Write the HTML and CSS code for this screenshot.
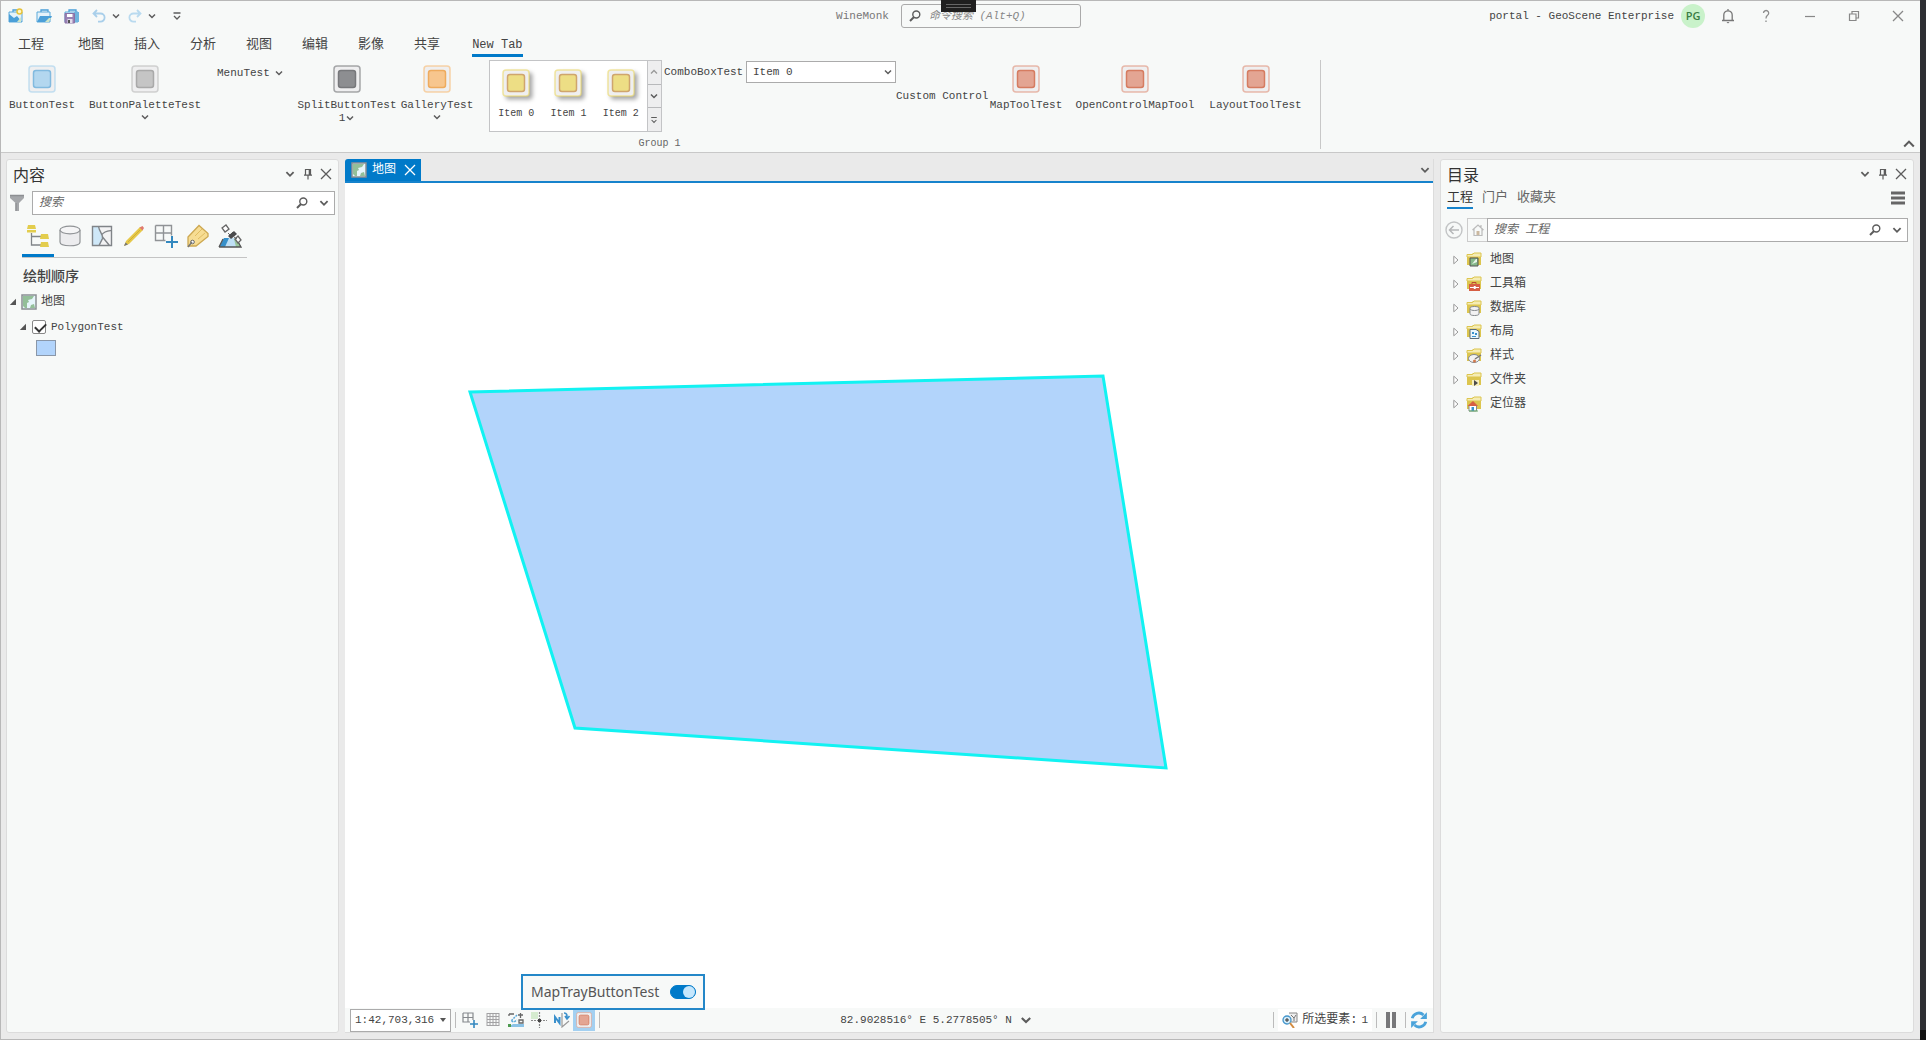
FILE: index.html
```html
<!DOCTYPE html>
<html lang="zh-CN">
<head>
<meta charset="utf-8">
<title>WineMonk</title>
<link rel="stylesheet" href="styles.css">
</head>
<body>
<svg class="defs" aria-hidden="true">
  <symbol id="chev" viewBox="0 0 10 10"><path d="M2 3.500l3 3 3-3" fill="none" stroke="currentColor" stroke-width="1.500"/></symbol>
  <symbol id="chev-up" viewBox="0 0 10 10"><path d="M2 6.500l3-3 3 3" fill="none" stroke="currentColor" stroke-width="1.300"/></symbol>
  <symbol id="more" viewBox="0 0 10 10"><path d="M1.500 2h7M2 5l3 3 3-3" fill="none" stroke="currentColor" stroke-width="1.300"/></symbol>
  <symbol id="cross" viewBox="0 0 12 12"><path d="M1 1l10 10M11 1L1 11" fill="none" stroke="currentColor" stroke-width="1.300"/></symbol>
  <symbol id="pin" viewBox="0 0 12 12"><path d="M3.500 1.500h5v5.500h-5zM7.300 1.500v5.500M2 7.200h8M6 7v4.500" fill="none" stroke="currentColor" stroke-width="1.200"/></symbol>
  <symbol id="lens" viewBox="0 0 12 12"><circle cx="7.300" cy="4.500" r="3.500" fill="none" stroke="currentColor" stroke-width="1.400"/><path d="M5 7L1 11" stroke="currentColor" stroke-width="2"/></symbol>
  <symbol id="sq" viewBox="0 0 28 28"><rect x="1" y="1" width="26" height="26" rx="3" fill="#efeff0" stroke="currentColor" stroke-opacity=".65" stroke-width="1.500"/><rect x="5.500" y="5.500" width="17" height="17" rx="2.500" fill="currentColor" fill-opacity=".85" stroke="var(--edge)" stroke-width="1.500"/></symbol>
  <symbol id="map" viewBox="0 0 16 16"><rect x="1" y="1" width="14" height="14" fill="#e6f5fb" stroke="#8b8f93" stroke-width="1.500"/><path d="M2 2h11l-2 3-4 1 1 2-2 1 0 5H4l-2-2z" fill="#93bf99"/><path d="M9 14l1-3 3-1 1 4z" fill="#93bf99"/></symbol>
  <symbol id="folder" viewBox="0 0 16 16"><path d="M1 13V3h5V1.500h9V13z" fill="#dcc54e"/><path d="M1 5V2.500h5.500L8 1h7v4z" fill="#f5ecb4" stroke="#dcc54e"/></symbol>
  <symbol id="tri" viewBox="0 0 8 8"><path d="M7 .8V7H.8z" fill="#555"/></symbol>
  <symbol id="tri-r" viewBox="0 0 6 10"><path d="M.8 1.200v7.600L5 5z" fill="#fff" stroke="#999"/></symbol>
  <symbol id="case" viewBox="0 0 16 16"><path d="M5 4V2h7v2" fill="none" stroke="#4a9fd8" stroke-width="1.300"/><path d="M1 14V4h13v10z" fill="#e4f2fa" stroke="#5aa9da"/></symbol>
</svg>

<div class="window">
  <header class="titlebar">
    <div class="quick">
      <button aria-label="新建工程"><svg width="16" height="16" viewBox="0 0 16 16"><use href="#case"/><path d="M1 14V6l5 4 3-2 5 6z" fill="#4a9fd8"/><path d="M9 14l4-5v5z" fill="#cfe6c8"/><circle cx="11.500" cy="3.500" r="2.500" fill="#fff6c9" stroke="#e6c33c" stroke-width="1.500"/></svg></button>
      <button aria-label="打开工程"><svg width="16" height="16" viewBox="0 0 16 16"><use href="#case"/><path d="M1 14l3-6h12l-3 6z" fill="#4a9fd8"/><path d="M9 14l4-4h2l-2 4z" fill="#cfe6c8"/></svg></button>
      <button aria-label="保存工程"><svg width="16" height="16" viewBox="0 0 16 16"><use href="#case"/><path d="M10 4h5v10h-5z" fill="#6fb4de"/><path d="M1 5.500h9.500V15H1z" fill="#9a82b4" stroke="#8a72a6"/><path d="M3 6h5.500v3H3z" fill="#fff"/><path d="M3.500 11h5v4h-5z" fill="#e2dcea"/><path d="M4 12h2v3H4z" fill="#555"/></svg></button>
      <button class="step" aria-label="撤消"><svg width="14" height="14" viewBox="0 0 14 14"><path d="M5 1L1.500 4.500 5 8M2 4.500h6.500a4 4 0 0 1 0 8.200H6" fill="none" stroke="#a9cfea" stroke-width="1.800"/></svg><svg class="ic10"><use href="#chev"/></svg></button>
      <button class="step" aria-label="恢复"><svg width="14" height="14" viewBox="0 0 14 14"><path d="M9 1l3.500 3.500L9 8M12 4.500H5.500a4 4 0 0 0 0 8.200H8" fill="none" stroke="#b9daef" stroke-width="1.800"/></svg><svg class="ic10"><use href="#chev"/></svg></button>
      <button class="customize" aria-label="自定义快速访问"><svg class="ic10"><use href="#more"/></svg></button>
    </div>
    <div class="center">
      <span class="app">WineMonk</span>
      <label class="command"><svg class="ic12"><use href="#lens"/></svg><input type="text" placeholder="命令搜索 (Alt+Q)" aria-label="命令搜索"></label>
    </div>
    <div class="account">
      <span>portal - GeoScene Enterprise</span>
      <span class="avatar">PG</span>
      <button class="bell" aria-label="通知"><svg width="14" height="16" viewBox="0 0 14 16"><path d="M1 12.500h12M2.800 12.500V7a4.200 4.200 0 0 1 8.400 0v5.500M7 1v2" fill="none" stroke="#777" stroke-width="1.300"/><path d="M5.500 14h3l-1.500 1.500z" fill="#777"/></svg></button>
      <button aria-label="帮助"><svg width="12" height="14" viewBox="0 0 12 14"><path d="M3.500 4a2.600 2.600 0 1 1 4 2.300C6.300 7.200 6 8 6 9.500M6 11.500v1.500" fill="none" stroke="#8c8c8c" stroke-width="1.300"/></svg></button>
      <button aria-label="最小化"><svg class="ic12" viewBox="0 0 12 12"><path d="M1 6.500h10" stroke="#888" stroke-width="1.200"/></svg></button>
      <button aria-label="还原"><svg class="ic12" viewBox="0 0 12 12"><path d="M1.500 4h6.500v6.500H1.500zM4 4V1.500h6.500v6.500H8" fill="none" stroke="#888" stroke-width="1.200"/></svg></button>
      <button aria-label="关闭"><svg class="ic12 gray"><use href="#cross"/></svg></button>
    </div>
    <div class="grip" aria-hidden="true"></div>
  </header>

  <nav class="tabs">
    <button class="file">工程</button><button>地图</button><button>插入</button><button>分析</button><button>视图</button><button>编辑</button><button>影像</button><button>共享</button><button class="active">New Tab</button>
  </nav>

  <section class="ribbon">
    <div class="group">
      <div class="tools">
        <button class="big blue"><svg class="ic28"><use href="#sq"/></svg><span>ButtonTest</span></button>
        <button class="big silver"><svg class="ic28"><use href="#sq"/></svg><span>ButtonPaletteTest</span><svg class="ic10"><use href="#chev"/></svg></button>
        <button class="menu">MenuTest<svg class="ic10"><use href="#chev"/></svg></button>
        <button class="big dark"><svg class="ic28"><use href="#sq"/></svg><span>SplitButtonTest</span><span class="second">1<svg class="ic10"><use href="#chev"/></svg></span></button>
        <button class="big orange"><svg class="ic28"><use href="#sq"/></svg><span>GalleryTest</span><svg class="ic10"><use href="#chev"/></svg></button>
        <div class="gallery">
          <button class="item"><svg class="ic28"><use href="#sq"/></svg>Item 0</button>
          <button class="item"><svg class="ic28"><use href="#sq"/></svg>Item 1</button>
          <button class="item"><svg class="ic28"><use href="#sq"/></svg>Item 2</button>
          <div class="scroll">
            <button aria-label="上"><svg class="ic10 faint"><use href="#chev-up"/></svg></button>
            <button aria-label="下"><svg class="ic10"><use href="#chev"/></svg></button>
            <button aria-label="更多"><svg class="ic8"><use href="#more"/></svg></button>
          </div>
        </div>
        <div class="combo">
          <label for="combo">ComboBoxTest</label>
          <div class="select"><select id="combo"><option>Item 0</option></select><svg class="ic10"><use href="#chev"/></svg></div>
        </div>
        <span class="custom">Custom Control</span>
        <button class="big red"><svg class="ic28"><use href="#sq"/></svg><span>MapToolTest</span></button>
        <button class="big red"><svg class="ic28"><use href="#sq"/></svg><span>OpenControlMapTool</span></button>
        <button class="big red"><svg class="ic28"><use href="#sq"/></svg><span>LayoutToolTest</span></button>
      </div>
      <div class="caption">Group 1</div>
    </div>
    <button class="collapse" aria-label="折叠功能区"><svg width="16" height="16"><use href="#chev-up"/></svg></button>
  </section>

  <main class="workspace">
    <aside class="panel contents">
      <div class="head"><h2>内容</h2><button aria-label="选项"><svg class="ic12"><use href="#chev"/></svg></button><button aria-label="固定"><svg class="ic12"><use href="#pin"/></svg></button><button aria-label="关闭"><svg class="ic12"><use href="#cross"/></svg></button></div>
      <div class="searchrow">
        <svg width="16" height="18" viewBox="0 0 16 18"><path d="M1 1h14v3L10 9v8H6.500V9L1 4z" fill="#a5a7aa"/><path d="M1 1.500h14M7 9v8" stroke="#8d8f92" stroke-width="1.300"/></svg>
        <label class="search"><input type="text" placeholder="搜索" aria-label="搜索"><svg class="ic12"><use href="#lens"/></svg><svg class="ic12"><use href="#chev"/></svg></label>
      </div>
      <div class="views">
        <button class="on" aria-label="按绘制顺序列出"><svg viewBox="0 0 24 24"><path d="M5.500 9v12H15M5.500 12.500H15" fill="none" stroke="#808488" stroke-width="1.300"/><path d="M2 1h7l1 4H1zM1 6h9v2.500H1zM15 10h7l1 5h-9zM15 18h7l1 5h-9z" fill="#e3cd4d"/></svg></button>
        <button aria-label="按数据源列出"><svg viewBox="0 0 24 24"><path d="M2 6v12c0 5 20 5 20 0V6" fill="#ececee" stroke="#909396" stroke-width="1.200"/><ellipse cx="12" cy="6" rx="10" ry="3.800" fill="#f5f5f6" stroke="#909396" stroke-width="1.200"/></svg></button>
        <button aria-label="按选择列出"><svg viewBox="0 0 24 24"><path d="M2.500 2.500h19v19h-19z" fill="#f3f3f4"/><path d="M2.500 2.500h6c1 6 4 8 4 13l-3 6h-7z" fill="#cfe8f8"/><path d="M2.500 2.500h19v19h-19zM8.500 2.500c1 6 5 8 4 12l-3.500 7M11.500 11c3-4 6-4 10-4.500M12.500 13l7 8.500" fill="none" stroke="#808488" stroke-width="1.400"/></svg></button>
        <button aria-label="按编辑列出"><svg viewBox="0 0 24 24"><path d="M2 22l2-5L18 3l3 3L7 20z" fill="#e6c848"/><path d="M17.500 3.500l3 3 1.500-2.500-1.500-2z" fill="#e07a6e"/><path d="M2 22l1.500-3.500 2.500 2z" fill="#777"/><path d="M6 18L18 6" stroke="#cfae38"/></svg></button>
        <button aria-label="按捕捉列出"><svg viewBox="0 0 24 24"><path d="M1.500 1.500h16v10M1.500 1.500v15h10M9.500 1.500v15M1.500 9h16" fill="none" stroke="#909396" stroke-width="1.400"/><path d="M18 12v12M12 18h12" stroke="#3388bf" stroke-width="2"/></svg></button>
        <button aria-label="按标注列出"><svg viewBox="0 0 24 24"><path d="M2 13L13 1.500l9 8v3L10 22H2z" fill="#f7dd93" stroke="#cda851" stroke-width="1.300"/><path d="M9 12l7-7M12 15l7-6" stroke="#e1bd62"/><circle cx="6.500" cy="18" r="1.800" fill="#fff" stroke="#666"/><path d="M6 18l-4 5" stroke="#777" stroke-width="1.500"/></svg></button>
        <button aria-label="按感知列出"><svg viewBox="0 0 24 24"><path d="M6 14h13l4 9H1z" fill="#bfe0f5"/><path d="M6 14h5L7 23H1z" fill="#3690ca"/><path d="M16 15l3-1 4 9h-5z" fill="#9ac79c"/><path d="M1 23h22l-4-7M1 23l4-8" fill="none" stroke="#555" stroke-width="1.300"/><path d="M4 4l4-3 3 4-4 3zM17 15l3 4 3-3-3-4z" fill="#fff" stroke="#666" stroke-width="1.300"/><path d="M10 9l2 2 3-3M16 13l3 2" fill="none" stroke="#666"/><path d="M10 12l6-5 3 3-6 5z" fill="#4b4b4d"/></svg></button>
      </div>
      <h3>绘制顺序</h3>
      <div class="row"><svg class="ic8"><use href="#tri"/></svg><svg class="ic16"><use href="#map"/></svg><span>地图</span></div>
      <div class="row layer"><svg class="ic8"><use href="#tri"/></svg><input type="checkbox" id="poly" checked><label for="poly">PolygonTest</label></div>
      <div class="swatch"></div>
    </aside>

    <section class="mapview">
      <div class="doctabs">
        <div class="doc"><svg class="ic16"><use href="#map"/></svg><span>地图</span><button aria-label="关闭"><svg class="ic12"><use href="#cross"/></svg></button></div>
        <button aria-label="视图列表"><svg class="ic12"><use href="#chev"/></svg></button>
      </div>
      <div class="canvas">
        <svg class="shape" width="720" height="410" viewBox="460 370 720 410"><path d="M470 392L1103 376 1166 768 575 728z" fill="#b2d4fb" stroke="#12f2f2" stroke-width="3"/></svg>
        <div class="tray"><label for="tray">MapTrayButtonTest</label><input type="checkbox" id="tray" checked></div>
      </div>
      <footer class="status">
        <div class="select scale"><select aria-label="比例尺"><option>1:42,703,316</option></select><svg width="6" height="4" viewBox="0 0 6 4"><path d="M0 0h6L3 4z" fill="#555"/></svg></div>
        <i></i>
        <div class="statustools">
          <button aria-label="网格添加"><svg viewBox="0 0 16 16"><path d="M1 1h10v7M1 1v9h7M6 1v9M1 5.500h10" fill="none" stroke="#85898d" stroke-width="1.200"/><path d="M12 8v8M8 12h8" stroke="#3388bf" stroke-width="1.600"/></svg></button>
          <button aria-label="格网"><svg viewBox="0 0 16 16"><path d="M2 1v13M5 1v13M8 1v13M11 1v13M14 1v13M2 1.500h12M2 4.500h12M2 7.500h12M2 10.500h12M2 13.500h12" stroke="#a2a2a4" stroke-width="1"/></svg></button>
          <button aria-label="校正"><svg viewBox="0 0 16 16"><path d="M1 2h5M1 2v2M10 3h5M12.500 1v5M11 8h4v3h-4z" fill="none" stroke="#666" stroke-width="1.300"/><path d="M9 3L3 9l3 1 3-2" fill="none" stroke="#5aa9da" stroke-width="1.500" stroke-dasharray="2 1"/><path d="M0 15l5-3h11v3z" fill="#8ac2e6"/><path d="M0 12h3v3H0z" fill="#4d9b50"/></svg></button>
          <button aria-label="捕捉"><svg viewBox="0 0 16 16"><path d="M0 0h7v7H0z" fill="#d5ebcf"/><path d="M8.500 0v16M0 8.500h16" stroke="#888" stroke-width="1.200" stroke-dasharray="2 1"/><path d="M7 7h3v3H7z" fill="#444"/></svg></button>
          <button aria-label="指北"><svg viewBox="0 0 16 16"><path d="M1 11V5l4.500 6V5" fill="none" stroke="#3a90cc" stroke-width="2"/><path d="M8 1v14l7-6" fill="none" stroke="#999" stroke-width="1.200"/><path d="M10 1c3 0 3 2 3 5M11 4l2 3 2.500-3" fill="none" stroke="#3a90cc" stroke-width="1.600"/></svg></button>
          <button class="pressed red" aria-label="MapTrayButtonTest"><svg><use href="#sq"/></svg></button>
        </div>
        <i></i>
        <button class="coords">82.9028516° E 5.2778505° N<svg width="14" height="14"><use href="#chev"/></svg></button>
        <i></i>
        <button class="selected"><svg class="ic16" viewBox="0 0 16 16"><path d="M7 1h8v9H9" fill="#eee" stroke="#888"/><path d="M9 3l3 3 2-3M12 6v3" fill="none" stroke="#777"/><circle cx="5" cy="8" r="4" fill="#d7edfa" stroke="#4295cc" stroke-width="1.300"/><path d="M5 6v4M3 8h4" stroke="#333"/><path d="M8 11l4 5" stroke="#d38b3f" stroke-width="2"/></svg>所选要素: <span class="num">1</span></button>
        <i></i>
        <button class="pause" aria-label="暂停"><svg width="12" height="16" viewBox="0 0 12 16"><path d="M1 0h4v16H1zM7 0h4v16H7z" fill="#77787a"/></svg></button>
        <i></i>
        <button aria-label="刷新"><svg width="18" height="18" viewBox="0 0 16 16"><path d="M2 6.500a6 6 0 0 1 10-3M14 9.500a6 6 0 0 1-10 3" fill="none" stroke="#4aa3da" stroke-width="2.500"/><path d="M15 1v6H9zM1 15V9h6z" fill="#4aa3da"/></svg></button>
      </footer>
    </section>

    <aside class="panel catalog">
      <div class="head"><h2>目录</h2><button aria-label="选项"><svg class="ic12"><use href="#chev"/></svg></button><button aria-label="固定"><svg class="ic12"><use href="#pin"/></svg></button><button aria-label="关闭"><svg class="ic12"><use href="#cross"/></svg></button></div>
      <div class="subtabs"><button class="active">工程</button><button>门户</button><button>收藏夹</button><button class="burger" aria-label="菜单"><svg width="16" height="14" viewBox="0 0 16 14"><path d="M1 2h14M1 7h14M1 12h14" stroke="#666" stroke-width="3"/></svg></button></div>
      <div class="searchrow">
        <button aria-label="返回"><svg width="18" height="18" viewBox="0 0 18 18"><circle cx="9" cy="9" r="8" fill="none" stroke="#c2c4c5" stroke-width="1.400"/><path d="M14 9H4.500M8.500 5l-4 4 4 4" fill="none" stroke="#b5b7b8" stroke-width="1.500"/></svg></button>
        <button class="home" aria-label="主页"><svg class="ic12" viewBox="0 0 12 12"><path d="M.5 6L6 1l5.500 5M2 5v6.500h8V5M9 1v2" fill="none" stroke="#bbb" stroke-width="1.200"/><path d="M4.500 7h3v4h-3z" fill="#cbb9a0"/></svg></button>
        <label class="search"><input type="text" placeholder="搜索 工程" aria-label="搜索 工程"><svg class="ic12"><use href="#lens"/></svg><svg class="ic12"><use href="#chev"/></svg></label>
      </div>
      <ul class="tree">
        <li><svg class="arrow"><use href="#tri-r"/></svg><svg class="ic16" viewBox="0 0 16 16"><use href="#folder"/><path d="M4 6h8v8H4z" fill="#87b98d" stroke="#555"/><path d="M6 12l4-5h1v3z" fill="#e8f5ea"/></svg>地图</li>
        <li><svg class="arrow"><use href="#tri-r"/></svg><svg class="ic16" viewBox="0 0 16 16"><use href="#folder"/><path d="M6 8V6.500h4V8" fill="none" stroke="#bb4a31"/><path d="M3 8h11v7H3z" fill="#d65f43"/><path d="M4 11.500h9M8 10.500h1.500v2H8z" stroke="#fff"/></svg>工具箱</li>
        <li><svg class="arrow"><use href="#tri-r"/></svg><svg class="ic16" viewBox="0 0 16 16"><use href="#folder"/><path d="M4 8v6c0 2 9 2 9 0V8c0-2-9-2-9 0z" fill="#f2f2f3" stroke="#85898d"/><path d="M4 9c1 2 8 2 9 0" fill="none" stroke="#85898d"/></svg>数据库</li>
        <li><svg class="arrow"><use href="#tri-r"/></svg><svg class="ic16" viewBox="0 0 16 16"><use href="#folder"/><path d="M4 5.500h6l3 2v7H4z" fill="#e9f5fc" stroke="#5b6b78"/><path d="M6 8h2v2H6zM9 9h2v2H9zM6 12h4v1H6z" fill="#3a90cc"/></svg>布局</li>
        <li><svg class="arrow"><use href="#tri-r"/></svg><svg class="ic16" viewBox="0 0 16 16"><use href="#folder"/><ellipse cx="8" cy="10.500" rx="5.500" ry="4" fill="#f2f2f3" stroke="#85898d"/><circle cx="8.500" cy="13" r="1.500" fill="#d37a4d"/><path d="M9 11l6-4" stroke="#777" stroke-width="1.500"/></svg>样式</li>
        <li><svg class="arrow"><use href="#tri-r"/></svg><svg class="ic16" viewBox="0 0 16 16"><use href="#folder"/><path d="M6 8h7v6H6z" fill="#f7efc0"/><path d="M8 8l4 3-4 3z" fill="#4b4b4d"/></svg>文件夹</li>
        <li><svg class="arrow"><use href="#tri-r"/></svg><svg class="ic16" viewBox="0 0 16 16"><use href="#folder"/><path d="M3 9.500h7.500V15H3z" fill="#fff" stroke="#85898d"/><path d="M1.500 10L7 5l5 5z" fill="#d65f43"/><path d="M5.500 11h2.500v4H5.500z" fill="#3a90cc"/><path d="M3 15h9" stroke="#6bb06d"/></svg>定位器</li>
      </ul>
    </aside>
  </main>
</div>
</body>
</html>
```
FILE: styles.css
```css
* { box-sizing: border-box; }

body {
  margin: 0;
  padding-right: 6px;
  min-height: 100vh;
  display: flex;
  background: linear-gradient(#2e2f33 99%, #111 99%);
  color: #444;
  font: 11px/12px "Liberation Mono", "Noto Sans CJK SC", monospace;
}

button, input, select {
  margin: 0;
  padding: 0;
  border: 0;
  background: none;
  color: inherit;
  font: inherit;
}

button {
  display: flex;
  align-items: center;
  justify-content: center;
}

input, select { min-width: 0; outline: 0; }
input::placeholder { color: #666; font-style: italic; opacity: 1; }
svg { display: block; flex: none; color: #5c5c5c; }
h2, h3, ul { margin: 0; padding: 0; font-weight: 400; }

.defs { position: absolute; width: 0; height: 0; }
.ic8 { width: 8px; height: 8px; }
.ic10 { width: 10px; height: 10px; }
.ic12 { width: 12px; height: 12px; }
.ic16 { width: 16px; height: 16px; }
.ic28 { width: 28px; height: 28px; }
.gray { color: #888; }
.faint { color: #999; }

.window {
  flex: 1;
  min-width: 0;
  display: flex;
  flex-direction: column;
  background: #f7f9f8;
  border: 1px solid #b8b8b8;
  border-right: 0;
}

/* Title bar */
.titlebar {
  position: relative;
  display: grid;
  grid-template-columns: 1fr auto 1fr;
  align-items: center;
  height: 30px;
}
.quick { display: flex; align-items: center; gap: 12px; padding-left: 7px; }
.quick .step { gap: 5px; margin-right: -5px; }
.quick .customize { margin-left: 8px; }
.center { display: flex; align-items: center; gap: 12px; padding-right: 4px; color: #777; }
.command {
  display: flex;
  align-items: center;
  gap: 8px;
  width: 180px;
  height: 24px;
  padding: 0 7px;
  border: 1px solid #aaa;
  border-radius: 3px;
}
.command input { flex: 1; }
.command input::placeholder { color: #888; }
.account { display: flex; align-items: center; justify-content: flex-end; }
.account button { width: 44px; height: 30px; }
.account .bell { width: 32px; }
.avatar {
  width: 24px;
  margin: 0 7px;
  border-radius: 50%;
  background: #c9f2ca;
  color: #3a7d44;
  font: 600 11px/24px "Open Sans", sans-serif;
  text-align: center;
}
.grip {
  position: absolute;
  top: -1px;
  left: 49%;
  width: 35px;
  height: 12px;
  background: linear-gradient(#666, #666) 50% 4px / 25px 1px no-repeat, linear-gradient(#666, #666) 50% 7px / 25px 1px no-repeat, #1f1f1f;
}

/* Ribbon tabs */
.tabs { display: flex; gap: 30px; height: 26px; padding-left: 17px; }
.tabs button { padding-top: 5px; border-bottom: 3px solid transparent; font-size: 13px; }
.tabs .file { margin-right: 4px; }
.tabs .active { margin-left: 2px; border-color: #007ac9; font-size: 12px; }

/* Ribbon */
.ribbon {
  display: flex;
  justify-content: space-between;
  height: 96px;
  padding-top: 3px;
  border-bottom: 1px solid #c8c8c8;
}
.group {
  display: flex;
  flex-direction: column;
  justify-content: space-between;
  height: 89px;
  padding-right: 16px;
  border-right: 1px solid #c8c8c8;
}
.tools {
  display: grid;
  grid-template-columns: 82px 124px 88px 104px 76px 189px 232px 93px 74px 144px 97px;
  align-items: start;
}
.big { flex-direction: column; justify-content: flex-start; padding-top: 5px; }
.big > span:first-of-type { margin: 6px 0 1px; }
.second { display: flex; align-items: center; }
.blue { --tone: #a8d2ee; --edge: #82badf; }
.silver { --tone: #bdbdbd; --edge: #a9a9a9; }
.dark { --tone: #7b7c80; --edge: #77787b; }
.orange { --tone: #f8be7d; --edge: #eeab5e; }
.red { --tone: #e19883; --edge: #d57c61; }
.item { --tone: #ecdb72; --edge: #cfa56e; }
.big .ic28, .item .ic28, .pressed svg { color: var(--tone); }
.menu { justify-content: flex-start; gap: 4px; padding: 7px 0 0 10px; }
.gallery {
  display: flex;
  width: 173px;
  height: 72px;
  margin-left: 14px;
  border: 1px solid #c3c4c6;
  background: #fff;
}
.item { flex: 1; flex-direction: column; justify-content: flex-start; gap: 11px; padding-top: 8px; font-size: 10px; }
.item .ic28 { filter: drop-shadow(3px 3px 2px rgba(0, 0, 0, .35)); }
.scroll { display: flex; flex-direction: column; width: 14px; border-left: 1px solid #c3c4c6; background: #eeeeef; }
.scroll button { flex: 1; }
.scroll button + button { border-top: 1px solid #b8b9bb; }
.combo { display: flex; align-items: center; justify-content: space-between; padding-top: 1px; }
.select {
  display: grid;
  grid-template-columns: 1fr auto;
  align-items: center;
  width: 150px;
  height: 22px;
  border: 1px solid #ababab;
  background: #fff;
}
.select select { grid-area: 1 / 1 / 2 / 3; height: 20px; padding-left: 6px; appearance: none; }
.select svg { grid-area: 1 / 2; margin-right: 2px; pointer-events: none; }
.custom { align-self: center; white-space: nowrap; }
.caption { padding-left: 14px; color: #666; font-size: 10px; line-height: 10px; text-align: center; }
.collapse { align-self: flex-end; padding-right: 3px; }

/* Workspace */
.workspace {
  flex: 1;
  display: grid;
  grid-template-columns: 333px 1fr 474px;
  gap: 6px;
  padding: 6px 6px 6px 5px;
  background: #eaeaea;
}
.panel { border: 1px solid #dcdcdc; border-radius: 3px; background: #f7f9f8; }
.head { display: flex; align-items: center; gap: 6px; height: 29px; padding: 0 6px 2px; }
.head h2 { flex: 1; color: #333; font: 16px/24px "Noto Sans CJK SC", sans-serif; }
.searchrow { display: flex; align-items: center; }
.search {
  flex: 1;
  display: flex;
  align-items: center;
  gap: 10px;
  height: 24px;
  padding: 0 4px 0 6px;
  border: 1px solid #ababab;
  background: #fff;
}
.search input { flex: 1; font-size: 12px; }

.contents .searchrow { gap: 7px; padding: 2px 3px 0 2px; }
.views {
  display: flex;
  width: 225px;
  margin: 6px 0 0 15px;
  border-bottom: 1px solid #c4c4c4;
}
.views button { width: 32px; height: 36px; padding-bottom: 4px; border-bottom: 3px solid transparent; }
.views .on { border-color: #007ac9; }
.views svg { width: 24px; height: 24px; }
.contents h3 { padding: 7px 0 4px 16px; font: 500 14px/20px "Noto Sans CJK SC", sans-serif; }
.row { display: flex; align-items: center; gap: 4px; height: 25px; padding-left: 2px; font-size: 12px; }
.layer { gap: 5px; padding-left: 12px; font-size: 11px; }
.row input {
  appearance: none;
  width: 14px;
  height: 14px;
  border: 1px solid #888;
  border-radius: 2px;
  background: #fff;
}
.row input::before {
  content: "";
  display: block;
  width: 9px;
  height: 5px;
  margin: 2px;
  border: solid #333;
  border-width: 0 0 2px 2px;
  rotate: -45deg;
}
.swatch { width: 20px; height: 16px; margin: 1px 0 0 29px; border: 1px solid #8a97a8; background: #b2d4fb; }

/* Map view */
.mapview { display: flex; flex-direction: column; border: solid #dcdcdc; border-width: 0 1px 1px 0; }
.doctabs { display: flex; justify-content: space-between; height: 24px; padding-right: 2px; border-bottom: 2px solid #1683cc; }
.doc {
  display: flex;
  align-items: center;
  gap: 5px;
  padding: 0 5px 0 6px;
  border-radius: 3px 0 0 0;
  background: #007ac9;
  color: #fff;
  font-size: 12px;
}
.doc button { margin-left: 3px; }
.doc button svg { color: #fff; }
.canvas { position: relative; flex: 1; background: #fff; }
.shape { position: absolute; left: 115px; top: 187px; }
.tray {
  position: absolute;
  left: 176px;
  bottom: -2px;
  display: flex;
  align-items: center;
  gap: 11px;
  height: 36px;
  padding: 0 7px 0 8px;
  border: 2px solid #2487c8;
  background: #f7f9f8;
  color: #555;
  font: 14px/20px "Noto Sans", sans-serif;
}
.tray input { appearance: none; display: flex; justify-content: flex-end; width: 26px; height: 14px; border: 1px solid #007ac9; border-radius: 7px; background: #007ac9; }
.tray input::before { content: ""; width: 12px; height: 12px; border-radius: 50%; background: #c5e7fd; }
.status { display: flex; align-items: center; gap: 4px; height: 24px; padding: 0 5px; background: #f7f9f8; }
.status i { width: 1px; height: 16px; background: #bbb; }
.scale { width: 101px; height: 23px; }
.scale select { padding-left: 4px; }
.scale svg { margin-right: 4px; }
.statustools { display: flex; margin-left: -2px; }
.statustools button { width: 23px; height: 22px; }
.statustools svg { width: 16px; height: 16px; }
.statustools .pressed { width: 22px; background: #a3d0f1; }
.coords { flex: 1; gap: 7px; }
.selected { gap: 4px; height: 22px; padding: 0 4px; background: #fff; font-size: 12px; }
.num { font-size: 11px; }
.pause { padding: 0 4px; }

/* Catalog */
.subtabs { display: flex; gap: 9px; height: 20px; padding: 0 7px 0 6px; color: #666; }
.subtabs button { border-bottom: 2px solid transparent; font-size: 13px; }
.subtabs .active { border-color: #1683cc; color: #333; }
.subtabs .burger { margin-left: auto; }
.catalog .searchrow { padding: 9px 5px 0 4px; }
.home { width: 20px; height: 24px; margin-left: 4px; border: solid #ccc; border-width: 1px 0 1px 1px; }
.tree { padding-top: 6px; list-style: none; font-size: 12px; }
.tree li { display: flex; align-items: center; height: 24px; padding-left: 12px; }
.tree .ic16 { margin: 0 8px 0 7px; }
.arrow { width: 6px; height: 10px; }
```
